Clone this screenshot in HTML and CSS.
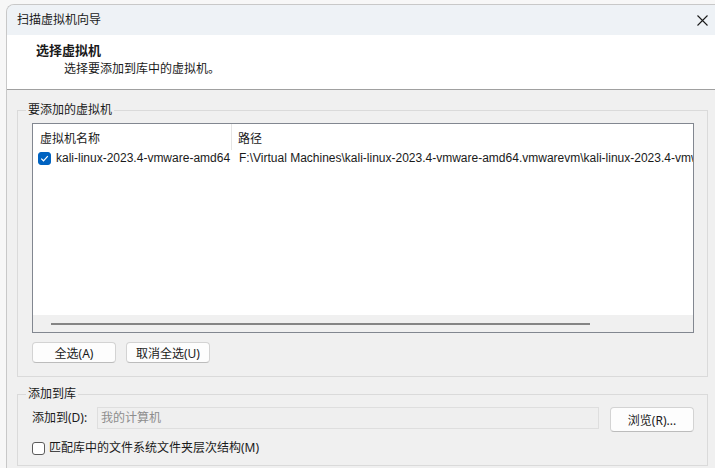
FILE: index.html
```html
<!DOCTYPE html>
<html lang="zh-CN">
<head>
    <meta charset="UTF-8">
    <meta name="viewport" content="width=device-width, initial-scale=1.0">
    <title>扫描虚拟机向导</title>
    <link rel="stylesheet" href="styles.css">
</head>
<body>
    <div class="window">
        <div class="title-bar">
            <span class="title-text">扫描虚拟机向导</span>
            <svg class="close-icon" width="11" height="11" viewBox="0 0 11 11">
                <path d="M0.5 0.5 L10.5 10.5 M10.5 0.5 L0.5 10.5" stroke="#1b1b1b" stroke-width="1.1" fill="none"/>
            </svg>
        </div>

        <div class="wizard-header">
            <div class="wizard-title">选择虚拟机</div>
            <div class="wizard-subtitle">选择要添加到库中的虚拟机。</div>
        </div>

        <div class="wizard-body">
            <fieldset class="group">
                <legend>要添加的虚拟机</legend>
                <div class="list-view">
                    <div class="list-header">
                        <div class="col col-name">虚拟机名称</div>
                        <div class="col col-path">路径</div>
                    </div>
                    <div class="list-rows">
                        <div class="list-row">
                            <div class="col col-name">
                                <span class="check checked">
                                    <svg width="9" height="9" viewBox="0 0 9 9">
                                        <path d="M1.2 4.6 L3.5 6.8 L7.8 2.2" stroke="#fff" stroke-width="1.2" fill="none"/>
                                    </svg>
                                </span>
                                <span class="vm-name">kali-linux-2023.4-vmware-amd64</span>
                            </div>
                            <div class="col col-path">F:\Virtual Machines\kali-linux-2023.4-vmware-amd64.vmwarevm\kali-linux-2023.4-vmware-amd64.vmx</div>
                        </div>
                    </div>
                    <div class="h-scroll">
                        <div class="h-thumb"></div>
                    </div>
                </div>
                <div class="button-row">
                    <button class="btn">全选(A)</button>
                    <button class="btn">取消全选(U)</button>
                </div>
            </fieldset>

            <fieldset class="group library-group">
                <legend>添加到库</legend>
                <div class="target-row">
                    <span class="field-label">添加到(D):</span>
                    <div class="text-field disabled">我的计算机</div>
                    <button class="btn browse-btn">浏览(R)...</button>
                </div>
                <label class="check-row">
                    <span class="check"></span>
                    <span>匹配库中的文件系统文件夹层次结构(M)</span>
                </label>
            </fieldset>
        </div>
    </div>
</body>
</html>
```

FILE: styles.css
```css
body {
    margin: 0;
    width: 715px;
    height: 468px;
    overflow: hidden;
    background-color: #f7f7f7;
    font-family: "Noto Sans", "Noto Sans CJK SC", sans-serif;
    font-size: 12px;
    color: #1a1a1a;
}
.window {
    position: relative;
    margin: 4px 0 0 6px;
    height: 470px;
    background-color: #f0f0f0;
    border-left: 1px solid #c8c8c8;
    border-top: 1px solid #c8c8c8;
    border-top-left-radius: 8px;
    overflow: hidden;
}
/* dark edge of the neighbouring window shadow */
.window::after {
    content: "";
    position: absolute;
    top: -1px;
    left: 164px;
    right: 0;
    height: 1px;
    background-color: #3a3a3a;
}
.title-bar {
    height: 30px;
    display: flex;
    align-items: center;
    justify-content: space-between;
    padding: 0 7px 0 10px;
    background-color: #eef2f6;
}
.title-text {
    line-height: 16px;
}
.close-icon {
    display: block;
}
.wizard-header {
    height: 55px;
    box-sizing: border-box;
    padding-top: 6px;
    background-color: #ffffff;
    border-bottom: 1px solid #a0a0a0;
}
.wizard-title {
    padding-left: 29px;
    font-weight: bold;
    font-size: 13px;
    line-height: 18px;
}
.wizard-subtitle {
    padding-left: 57px;
    margin-top: 1px;
    line-height: 18px;
}
.wizard-body {
    padding-top: 12px;
}
.group {
    margin: 0 7px 0 10px;
    padding: 5px 13px 13px 14px;
    border: 1px solid #dadada;
    min-width: 0;
}
.group legend {
    padding: 0 2px;
    margin-left: -6px;
    line-height: 16px;
}
.list-view {
    height: 210px;
    box-sizing: border-box;
    border: 1px solid #828790;
    background-color: #ffffff;
    display: flex;
    flex-direction: column;
    overflow: hidden;
}
.list-header, .list-row {
    display: flex;
    white-space: nowrap;
}
.list-header {
    height: 26px;
    align-items: stretch;
}
.list-header .col {
    padding-top: 4px;
    line-height: 18px;
    display: flex;
    align-items: center;
}
.list-header .col-name {
    border-right: 1px solid #e5e5e5;
}
.col-name {
    width: 199px;
    flex-shrink: 0;
    padding-left: 7px;
    box-sizing: border-box;
    display: flex;
    align-items: center;
}
.col-path {
    padding-left: 6px;
}
.list-rows {
    flex: 1;
    font-family: "Liberation Sans", "Noto Sans CJK SC", sans-serif;
}
.list-row {
    height: 16px;
    align-items: center;
    line-height: 16px;
}
.list-row .col-name {
    padding-left: 5px;
    width: 200px;
}
.list-row .col-path {
    padding-left: 6px;
}
.check {
    width: 13px;
    height: 13px;
    box-sizing: border-box;
    border: 1px solid #5c5c5c;
    border-radius: 3px;
    background-color: #ffffff;
    display: inline-flex;
    align-items: center;
    justify-content: center;
    flex-shrink: 0;
}
.check.checked {
    background-color: #0063c1;
    border-color: #0063c1;
}
.check svg {
    display: block;
}
.vm-name {
    margin-left: 5px;
}
.h-scroll {
    height: 17px;
    background-color: #f0f0f0;
    display: flex;
    align-items: center;
}
.h-thumb {
    margin-left: 18px;
    width: 539px;
    height: 2px;
    background-color: #858585;
}
.button-row {
    display: flex;
    gap: 10px;
    margin-top: 9px;
}
.btn {
    height: 21px;
    width: 84px;
    padding: 0;
    font-family: inherit;
    font-size: 12px;
    color: #1a1a1a;
    background-color: #fdfdfd;
    border: 1px solid #d3d3d3;
    border-bottom-color: #bcbcbc;
    border-radius: 4px;
}
.library-group {
    margin-top: 9px;
    padding-bottom: 9px;
}
.target-row {
    display: flex;
    align-items: flex-start;
}
.field-label {
    width: 65px;
    line-height: 22px;
}
.text-field {
    width: 502px;
    height: 22px;
    box-sizing: border-box;
    padding-left: 3px;
    line-height: 20px;
    border: 1px solid #dedede;
    background-color: #efefef;
}
.text-field.disabled {
    color: #8d8d8d;
}
.browse-btn {
    margin-left: 11px;
    height: 25px;
}
.check-row {
    display: flex;
    align-items: center;
    gap: 4px;
    margin-top: 8px;
    line-height: 16px;
}
```
